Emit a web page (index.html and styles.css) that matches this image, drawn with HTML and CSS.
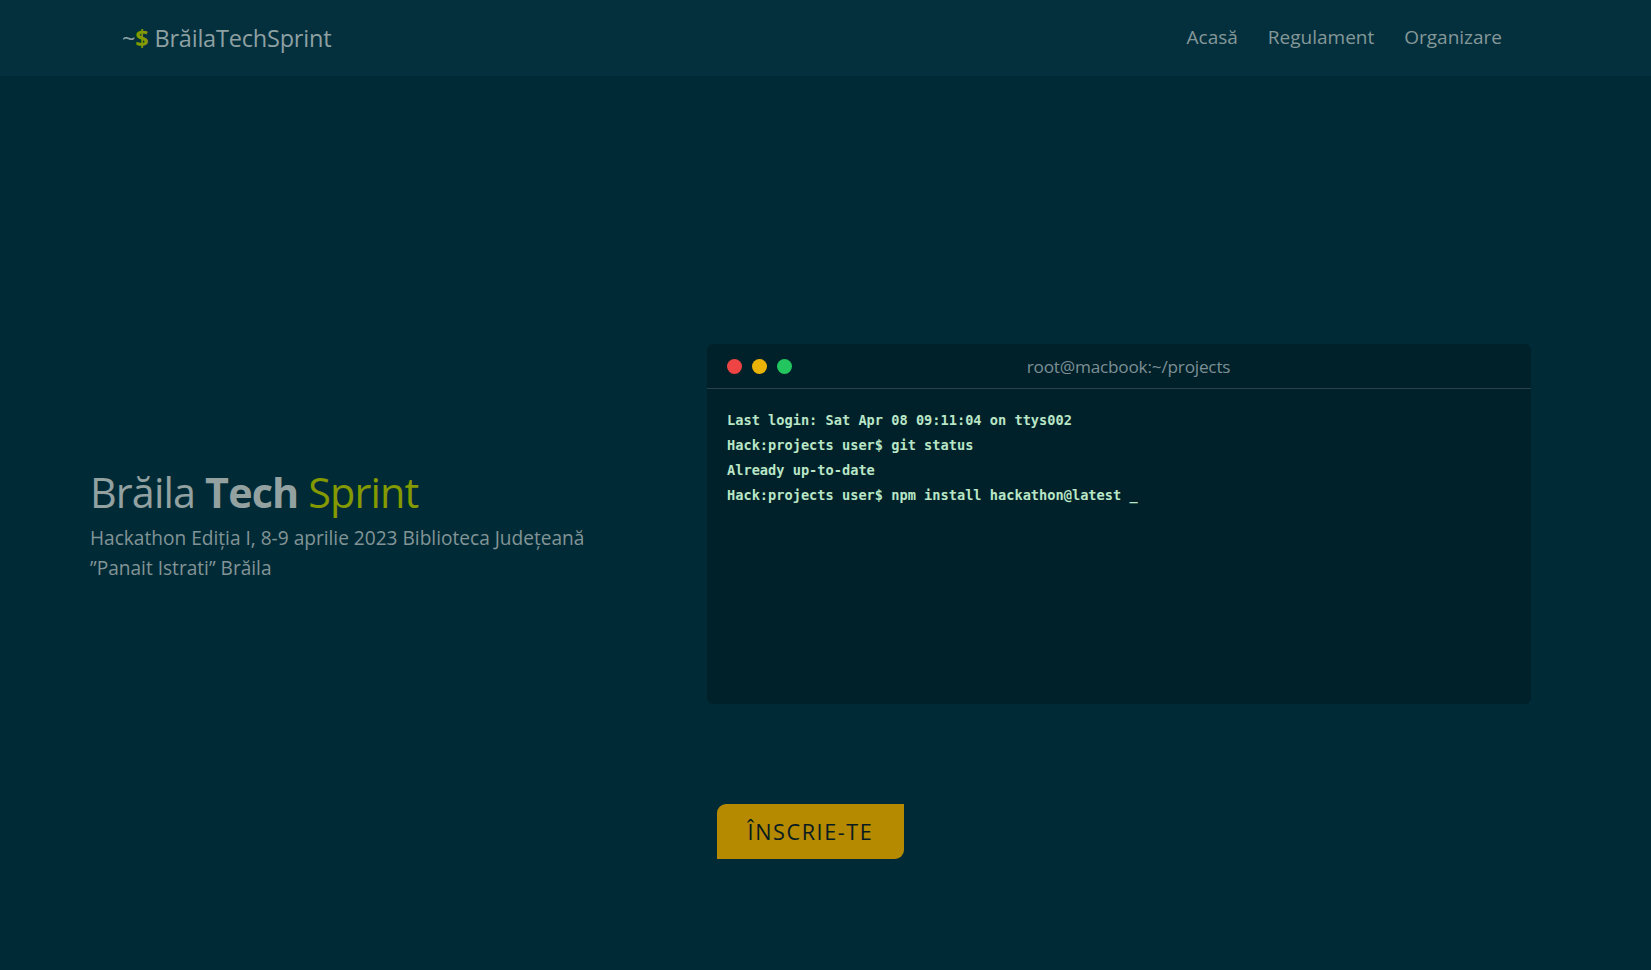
FILE: index.html
```html
<!DOCTYPE html>
<html lang="ro">
<head>
<meta charset="utf-8">
<title>BrăilaTechSprint</title>
<link rel="stylesheet" href="styles.css">
</head>
<body>
<header class="topbar">
  <div class="topbar-inner">
    <a class="brand" href="#"><span class="tilde">~</span><span class="dollar">$</span> BrăilaTechSprint</a>
    <nav class="nav">
      <a href="#">Acasă</a>
      <a href="#">Regulament</a>
      <a href="#">Organizare</a>
    </nav>
  </div>
</header>
<main class="hero">
  <div class="hero-row">
    <div class="hero-text">
      <h1 class="hero-title">Brăila <strong>Tech</strong> <span class="accent">Sprint</span></h1>
      <p class="hero-sub">Hackathon Ediția I, 8-9 aprilie 2023 Biblioteca Județeană ”Panait Istrati” Brăila</p>
    </div>
    <div class="terminal">
      <div class="term-bar">
        <div class="dots"><span class="dot red"></span><span class="dot yellow"></span><span class="dot green"></span></div>
        <div class="term-title">root@macbook:~/projects</div>
      </div>
      <div class="term-body">
        <div class="line">Last login: Sat Apr 08 09:11:04 on ttys002</div>
        <div class="line">Hack:projects user$ git status</div>
        <div class="line">Already up-to-date</div>
        <div class="line">Hack:projects user$ npm install hackathon@latest _</div>
      </div>
    </div>
  </div>
  <div class="cta-row">
    <div></div>
    <div><a class="btn" href="#">ÎNSCRIE-TE</a></div>
  </div>
</main>
</body>
</html>
```

FILE: styles.css
```css
* { box-sizing: border-box; }
html, body { margin: 0; padding: 0; }
body {
  background: #002b36;
  font-family: "Open Sans", "Noto Sans", sans-serif;
  color: #839496;
  height: 970px;
  overflow: hidden;
}
a { text-decoration: none; color: inherit; }

.topbar {
  background: #04303d;
  height: 76px;
}
.topbar-inner {
  height: 75px;
  display: flex;
  align-items: center;
  justify-content: space-between;
  padding: 0 149px 0 122px;
}
.brand {
  font-size: 23.5px;
  color: #8fa0a3;
  letter-spacing: -0.2px;
}
.brand .tilde { color: #8fa0a3; }
.brand .dollar { color: #859900; font-weight: 700; }
.nav {
  display: flex;
  gap: 30px;
  font-size: 19px;
  color: #859899;
  margin-top: -2px;
}

.hero-row {
  display: grid;
  grid-template-columns: 1fr 824px;
  align-items: center;
  padding: 268px 120px 0 90px;
  gap: 40px;
}
.hero-text { max-width: 540px; padding-top: 3px; }
.hero-title {
  margin: 0;
  font-size: 41.3px;
  font-weight: 400;
  color: #93a1a1;
  line-height: 1.2;
  letter-spacing: -0.85px;
}
.hero-title strong { font-weight: 700; }
.hero-title .accent { color: #859900; }
.hero-sub {
  margin: 5px 0 0;
  font-size: 19.1px;
  line-height: 30px;
  color: #839496;
}

.terminal {
  height: 360px;
  background: #00212a;
  border-radius: 6px;
  overflow: hidden;
}
.term-bar {
  height: 45px;
  display: flex;
  align-items: center;
  padding: 0 20px;
  border-bottom: 1px solid #2a434b;
}
.dots { display: flex; gap: 10px; }
.dot { width: 15px; height: 15px; border-radius: 50%; display: block; }
.dot.red { background: #ef4444; }
.dot.yellow { background: #eab308; }
.dot.green { background: #22c55e; }
.term-title {
  flex: 1;
  text-align: center;
  font-size: 17.2px;
  color: #7d8f94;
  padding-right: 46px;
  letter-spacing: -0.2px;
}
.term-body {
  padding: 19px 20px;
  font-family: "DejaVu Sans Mono", "Liberation Mono", monospace;
  font-weight: 700;
  font-size: 13.65px;
  line-height: 25px;
  color: #b9e6c6;
}

.cta-row {
  display: grid;
  grid-template-columns: 1fr 824px;
  padding: 100px 120px 0 92px;
  gap: 40px;
}
.btn {
  display: inline-block;
  margin-left: 10px;
  width: 187px;
  height: 55px;
  line-height: 56px;
  text-align: center;
  background: #b58900;
  color: #071b20;
  font-size: 21.6px;
  letter-spacing: 1.6px;
  border-radius: 9px 0 9px 0;
}
```
